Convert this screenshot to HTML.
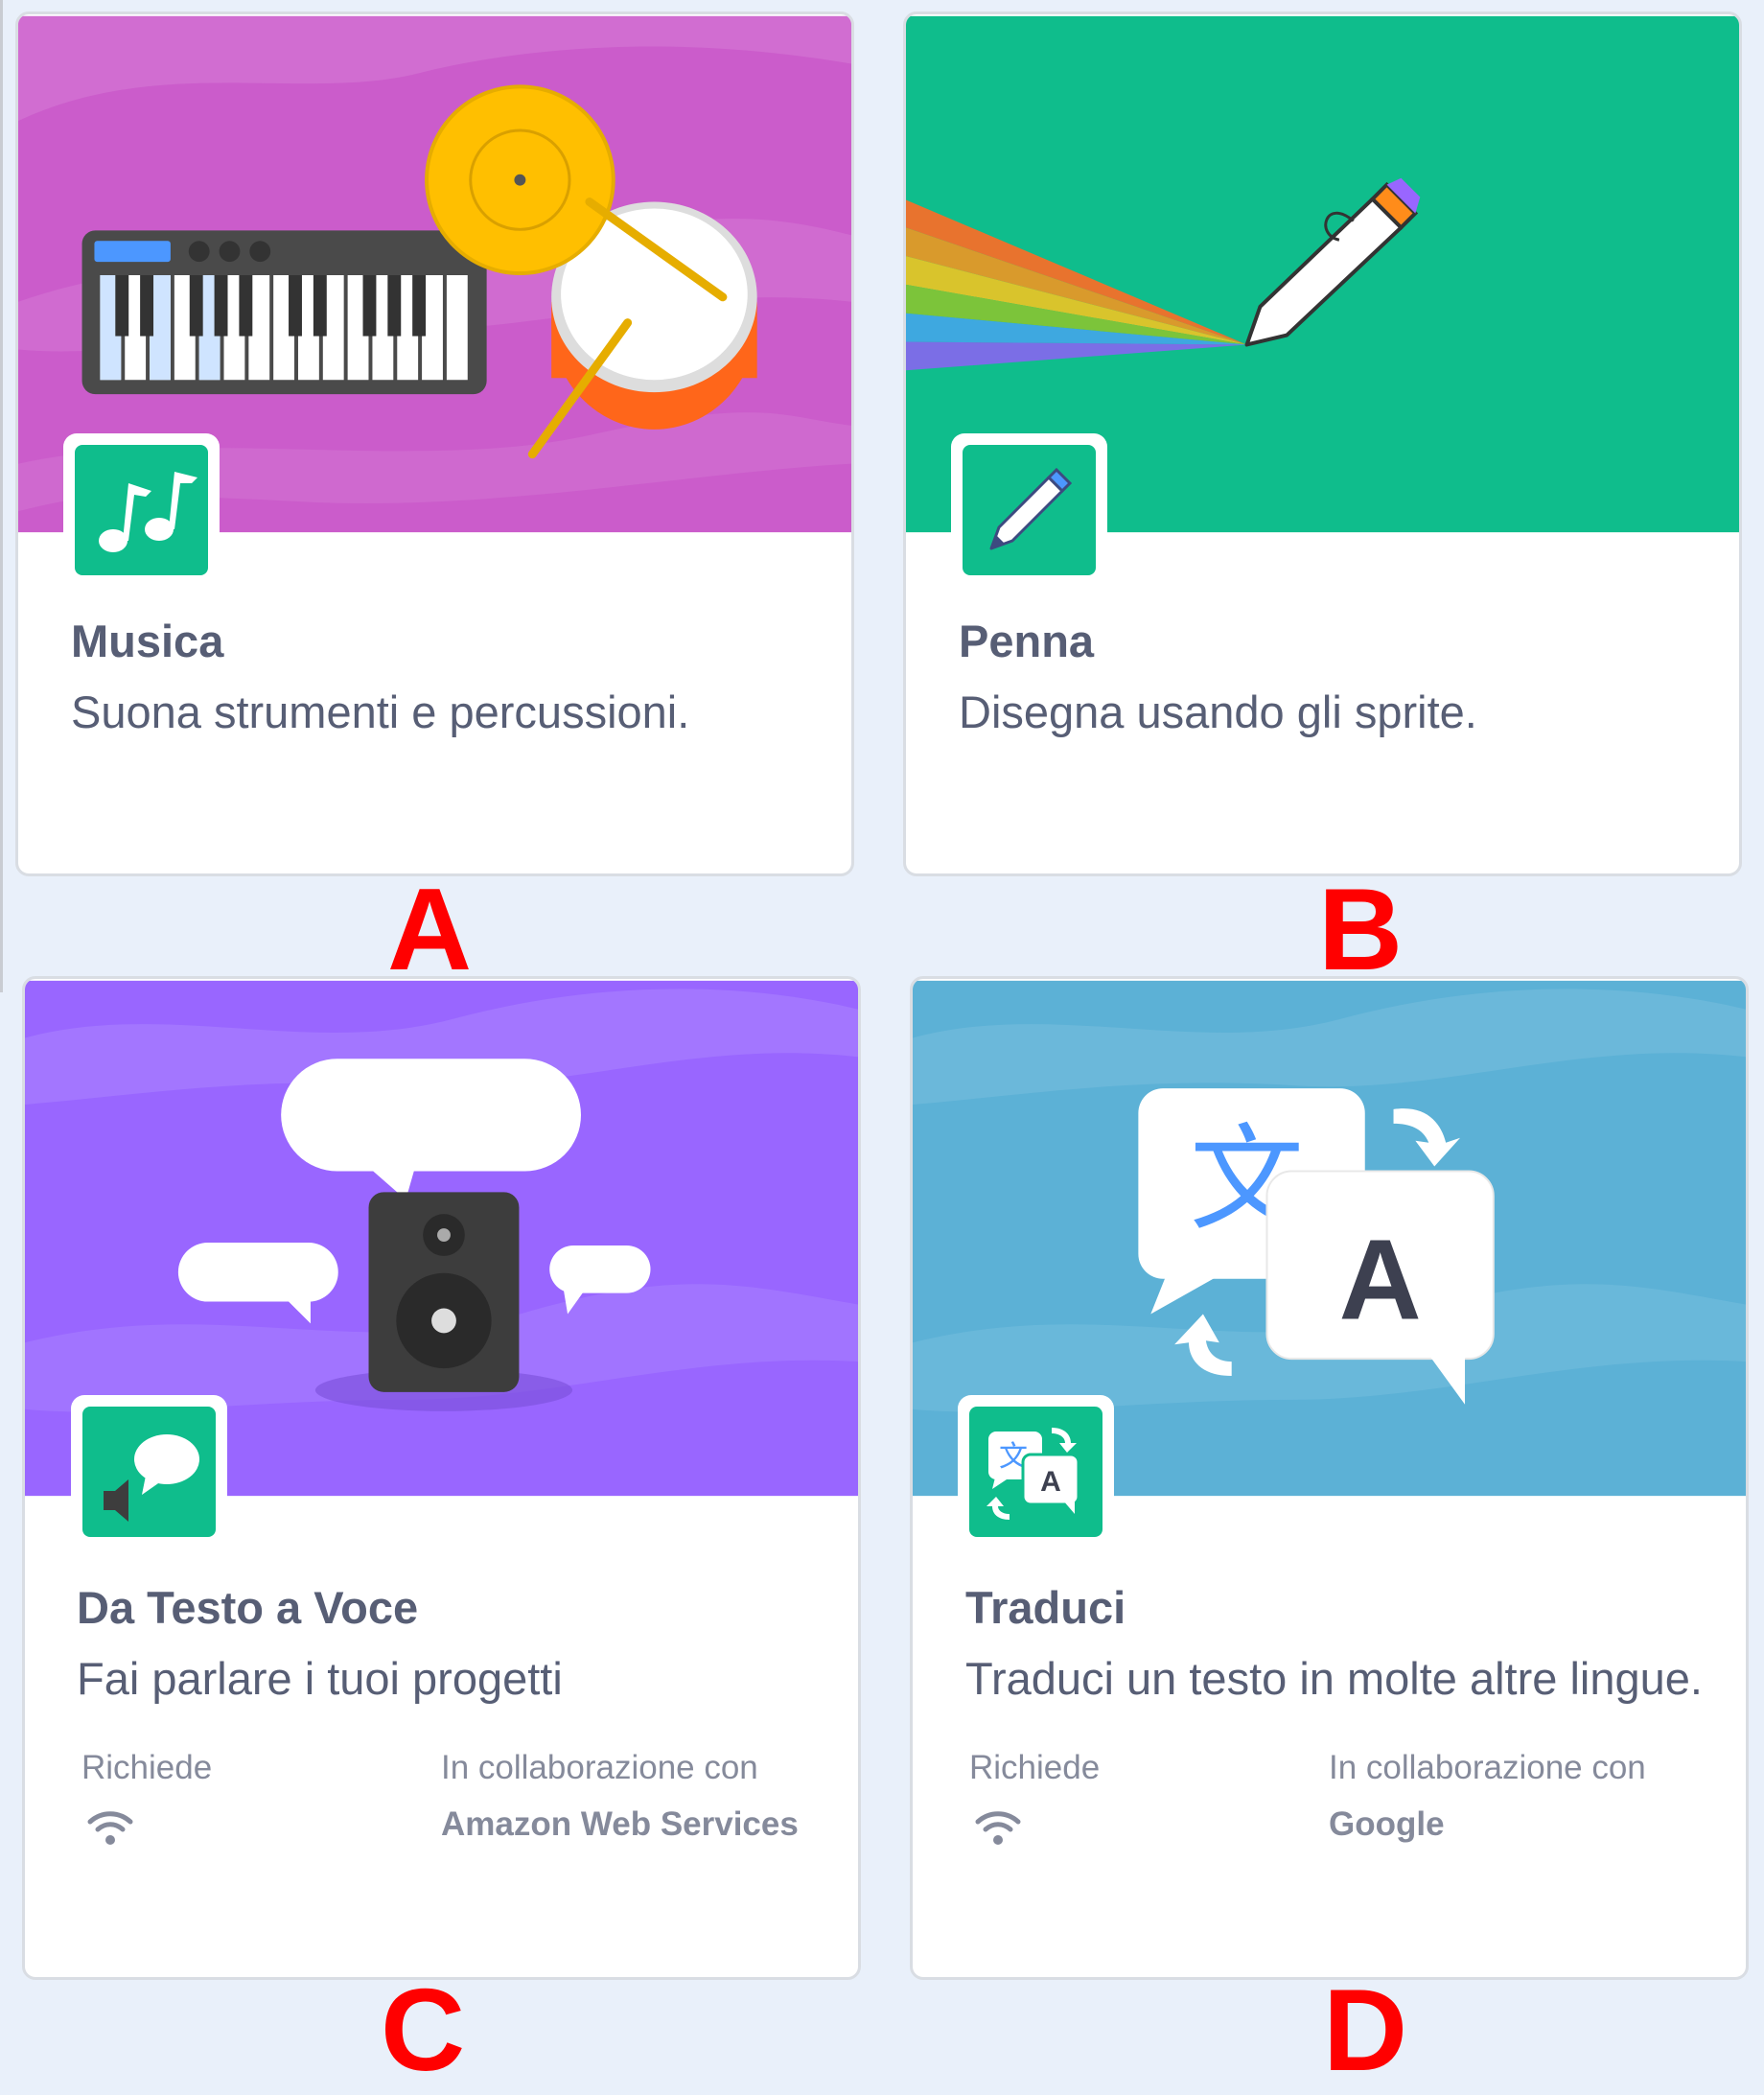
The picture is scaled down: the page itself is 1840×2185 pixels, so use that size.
<!DOCTYPE html>
<html><head><meta charset="utf-8"><style>
*{margin:0;padding:0;box-sizing:border-box}
body{width:1840px;height:2161px;background:#e9f0fa;position:relative;overflow:hidden;font-family:"Liberation Sans",Arial,sans-serif}
.card{position:absolute;background:#fff;border:3px solid #d9dde3;border-radius:14px;overflow:hidden}
.ban{position:absolute;left:0;top:0;width:100%;}
.ib{position:absolute;background:#fff;border-radius:14px;width:163px;height:156px}
.ig{position:absolute;left:12px;top:12px;width:139px;height:136px;background:#0fbd8c;border-radius:8px;overflow:hidden}
.t{position:absolute;font-weight:bold;font-size:47px;color:#575e75}
.d{position:absolute;font-size:47px;color:#575e75;white-space:nowrap}
.s{position:absolute;font-size:35px;color:#858a9b;white-space:nowrap}
.sb{position:absolute;font-size:35px;color:#858a9b;font-weight:bold;white-space:nowrap}
.lab{position:absolute;color:#f00;font-weight:bold;font-size:122px;line-height:1;transform:translateX(-50%)}
</style></head><body>
<div style="position:absolute;left:0;top:0;width:3px;height:1035px;background:#c9ccd2"></div>

<div class="lab" style="left:448px;top:908px">A</div>
<div class="lab" style="left:1419px;top:908px">B</div>

<!-- Card A -->
<div class="card" style="left:16px;top:12px;width:875px;height:902px">
 <svg class="ban" width="875" height="542" viewBox="0 0 875 542">
  <rect width="875" height="542" fill="#cb5ccb"/>
  <path d="M0 110 C150 40 300 90 420 60 S700 20 875 50 L875 0 0 0Z" fill="#d375d3" opacity=".7"/>
  <path d="M0 300 C200 230 350 290 520 250 S760 200 875 230 L875 300 C700 280 560 330 400 330 S100 360 0 350Z" fill="#d375d3" opacity=".6"/>
  <path d="M0 470 C180 430 420 480 600 440 S800 420 875 430 L875 470 C700 480 500 520 300 510 S80 500 0 520Z" fill="#d375d3" opacity=".5"/>
  <rect x="67" y="225" width="425" height="172" rx="14" fill="#4a4a4a"/>
  <rect x="80" y="236" width="80" height="22" rx="3" fill="#4c97ff"/>
  <circle cx="190" cy="247" r="11" fill="#333"/><circle cx="222" cy="247" r="11" fill="#333"/><circle cx="254" cy="247" r="11" fill="#333"/>
  <g fill="#fff">
   <rect x="86" y="272" width="22" height="110"/><rect x="112" y="272" width="22" height="110"/><rect x="138" y="272" width="22" height="110"/><rect x="164" y="272" width="22" height="110"/><rect x="190" y="272" width="22" height="110"/><rect x="216" y="272" width="22" height="110"/><rect x="242" y="272" width="22" height="110"/><rect x="268" y="272" width="22" height="110"/><rect x="294" y="272" width="22" height="110"/><rect x="320" y="272" width="22" height="110"/><rect x="346" y="272" width="22" height="110"/><rect x="372" y="272" width="22" height="110"/><rect x="398" y="272" width="22" height="110"/><rect x="424" y="272" width="22" height="110"/><rect x="450" y="272" width="22" height="110"/>
  </g>
  <g fill="#cfe4ff"><rect x="86" y="272" width="22" height="110"/><rect x="138" y="272" width="22" height="110"/><rect x="190" y="272" width="22" height="110"/></g>
  <g fill="#333">
   <rect x="102" y="272" width="14" height="64"/><rect x="128" y="272" width="14" height="64"/><rect x="180" y="272" width="14" height="64"/><rect x="206" y="272" width="14" height="64"/><rect x="232" y="272" width="14" height="64"/><rect x="284" y="272" width="14" height="64"/><rect x="310" y="272" width="14" height="64"/><rect x="362" y="272" width="14" height="64"/><rect x="388" y="272" width="14" height="64"/><rect x="414" y="272" width="14" height="64"/>
  </g>
  <ellipse cx="668" cy="322" rx="108" ry="112" fill="#ff661a"/>
  <rect x="560" y="300" width="216" height="80" fill="#ff661a"/>
  <ellipse cx="668" cy="295" rx="108" ry="100" fill="#ddd"/>
  <ellipse cx="668" cy="292" rx="98" ry="90" fill="#fff"/>
  <circle cx="527" cy="172" r="100" fill="#e6ad00"/>
  <circle cx="527" cy="172" r="96" fill="#ffbf00"/>
  <circle cx="527" cy="172" r="52" fill="none" stroke="#d9a000" stroke-width="3"/>
  <circle cx="527" cy="172" r="6" fill="#555"/>
  <line x1="600" y1="195" x2="740" y2="295" stroke="#e6ad00" stroke-width="9" stroke-linecap="round"/>
  <line x1="640" y1="322" x2="540" y2="460" stroke="#e6ad00" stroke-width="9" stroke-linecap="round"/>
 </svg>
 <div class="ib" style="left:47px;top:437px"><div class="ig">
  <svg width="139" height="136" viewBox="0 0 139 136"><g fill="#fff">
   <ellipse cx="40" cy="100" rx="15" ry="12"/><ellipse cx="88" cy="88" rx="15" ry="12"/>
   <path d="M50 100 L56 40 L80 48 L74 54 L62 52 L56 100Z"/><path d="M98 88 L104 28 L128 34 L122 40 L110 40 L104 88Z"/></g></svg>
 </div></div>
 <div class="t" style="left:55px;top:626px">Musica</div>
 <div class="d" style="left:55px;top:700px">Suona strumenti e percussioni.</div>
</div>

<!-- Card B -->
<div class="card" style="left:942px;top:12px;width:875px;height:902px">
 <svg class="ban" width="875" height="542" viewBox="0 0 875 542">
  <rect width="875" height="542" fill="#0fbd8c"/>
  <path d="M0 193 L358 345 L0 222Z" fill="#e8732e"/>
  <path d="M0 222 L358 345 L0 252Z" fill="#d99a2c"/>
  <path d="M0 252 L358 345 L0 282Z" fill="#d9c42c"/>
  <path d="M0 282 L358 345 L0 312Z" fill="#7cc43a"/>
  <path d="M0 312 L358 345 L0 342Z" fill="#3ea8e0"/>
  <path d="M0 342 L358 345 L0 372Z" fill="#7b6ee6"/>
  <path d="M358 345 L372 305 L490 192 L520 222 L400 335Z" fill="#fff" stroke="#333" stroke-width="4" stroke-linejoin="round"/>
  <path d="M490 192 L505 177 L535 207 L520 222Z" fill="#ff8c1a" stroke="#333" stroke-width="4"/>
  <path d="M505 177 L520 170 L540 190 L535 207Z" fill="#9966ff"/>
  <path d="M470 215 C440 190 430 230 455 235" fill="none" stroke="#333" stroke-width="3"/>
 </svg>
 <div class="ib" style="left:47px;top:437px"><div class="ig">
  <svg width="139" height="136" viewBox="0 0 139 136">
   <path d="M30 108 L38 86 L90 34 L104 48 L52 100Z" fill="#fff" stroke="#3d4a80" stroke-width="3" stroke-linejoin="round"/>
   <path d="M90 34 L98 26 L112 40 L104 48Z" fill="#4c97ff" stroke="#3d4a80" stroke-width="3"/>
   <path d="M30 108 L35 94 L44 103Z" fill="#3d4a80"/></svg>
 </div></div>
 <div class="t" style="left:55px;top:626px">Penna</div>
 <div class="d" style="left:55px;top:700px">Disegna usando gli sprite.</div>
</div>

<!-- Card C -->
<div class="card" style="left:23px;top:1018px;width:875px;height:1047px">
 <svg class="ban" width="875" height="541" viewBox="0 0 875 541">
  <rect width="875" height="541" fill="#9966ff"/>
  <path d="M0 60 C150 20 300 80 450 40 S750 0 875 30 L875 80 C700 60 560 120 400 110 S120 120 0 130Z" fill="#a67dff" opacity=".7"/>
  <path d="M0 380 C200 330 350 400 520 350 S760 320 875 340 L875 400 C700 390 560 440 400 440 S100 460 0 450Z" fill="#a67dff" opacity=".6"/>
  <ellipse cx="440" cy="430" rx="135" ry="22" fill="#7a4fd9" opacity=".6"/>
  <rect x="269" y="82" width="315" height="118" rx="59" fill="#fff"/>
  <path d="M360 195 L400 230 L410 195Z" fill="#fff"/>
  <rect x="361" y="222" width="158" height="210" rx="16" fill="#3d3d3d"/>
  <circle cx="440" cy="267" r="22" fill="#2a2a2a"/><circle cx="440" cy="267" r="7" fill="#aaa"/>
  <circle cx="440" cy="357" r="50" fill="#2a2a2a"/><circle cx="440" cy="357" r="13" fill="#ddd"/>
  <rect x="161" y="275" width="168" height="62" rx="31" fill="#fff"/>
  <path d="M270 330 L300 360 L300 330Z" fill="#fff"/>
  <rect x="551" y="278" width="106" height="50" rx="25" fill="#fff"/>
  <path d="M565 320 L570 350 L590 322Z" fill="#fff"/>
 </svg>
 <div class="ib" style="left:48px;top:434px"><div class="ig">
  <svg width="139" height="136" viewBox="0 0 139 136">
   <ellipse cx="88" cy="55" rx="34" ry="26" fill="#fff"/><path d="M66 72 L62 92 L82 78Z" fill="#fff"/>
   <path d="M22 88 L34 88 L48 76 L48 120 L34 108 L22 108Z" fill="#3d3d3d"/></svg>
 </div></div>
 <div class="t" style="left:54px;top:628px">Da Testo a Voce</div>
 <div class="d" style="left:54px;top:702px">Fai parlare i tuoi progetti</div>
 <div class="s" style="left:59px;top:803px">Richiede</div>
 <svg style="position:absolute;left:64px;top:866px" width="50" height="40" viewBox="0 0 50 40"><g fill="none" stroke="#858a9b" stroke-width="5" stroke-linecap="round"><path d="M4 13 C16 2 34 2 46 13"/><path d="M12 21 C20 14 30 14 38 21"/></g><circle cx="25" cy="32" r="5" fill="#858a9b"/></svg>
 <div class="s" style="left:434px;top:803px">In collaborazione con</div>
 <div class="sb" style="left:434px;top:862px">Amazon Web Services</div>
</div>

<!-- Card D -->
<div class="card" style="left:949px;top:1018px;width:875px;height:1047px">
 <svg class="ban" width="875" height="541" viewBox="0 0 875 541">
  <rect width="875" height="541" fill="#5cb1d6"/>
  <path d="M0 60 C150 20 300 80 450 40 S750 0 875 30 L875 80 C700 60 560 120 400 110 S120 120 0 130Z" fill="#6fbadb" opacity=".8"/>
  <path d="M0 380 C200 330 350 400 520 350 S760 320 875 340 L875 400 C700 390 560 440 400 440 S100 460 0 450Z" fill="#6fbadb" opacity=".7"/>
  <rect x="237" y="113" width="238" height="200" rx="26" fill="#fff"/>
  <path d="M270 300 L250 350 L330 305Z" fill="#fff"/>
  <text x="351" y="250" font-family="Noto Sans CJK SC,sans-serif" font-size="120" fill="#4c97ff" text-anchor="middle">文</text>
  <rect x="372" y="200" width="238" height="197" rx="26" fill="#fff" stroke="#e8e8e8" stroke-width="2"/>
  <path d="M540 390 L580 445 L580 390Z" fill="#fff"/>
  <text x="491" y="355" font-family="Liberation Sans,sans-serif" font-weight="bold" font-size="120" fill="#3d4050" text-anchor="middle">A</text>
  <path d="M505 135 C540 130 555 150 560 170 L575 165 L548 195 L528 168 L542 170 C536 155 522 150 505 150Z" fill="#fff"/>
  <path d="M335 415 C300 415 290 395 290 380 L275 382 L305 350 L322 380 L308 378 C310 392 320 400 335 400Z" fill="#fff"/>
 </svg>
 <div class="ib" style="left:47px;top:434px"><div class="ig">
  <svg width="139" height="136" viewBox="0 0 139 136">
   <rect x="20" y="26" width="56" height="50" rx="8" fill="#fff"/><path d="M28 70 L24 86 L42 74Z" fill="#fff"/>
   <text x="46" y="62" font-family="Noto Sans CJK SC,sans-serif" font-size="30" fill="#4c97ff" text-anchor="middle">文</text>
   <rect x="56" y="50" width="58" height="52" rx="8" fill="#fff" stroke="#0fbd8c" stroke-width="3"/><path d="M98 98 L110 112 L110 98Z" fill="#fff"/>
   <text x="85" y="88" font-family="Liberation Sans,sans-serif" font-weight="bold" font-size="30" fill="#3d4050" text-anchor="middle">A</text>
   <path d="M86 22 C100 22 106 30 106 38 L112 38 L102 48 L94 38 L100 38 C100 32 94 28 86 28Z" fill="#fff"/>
   <path d="M42 118 C30 118 24 112 24 104 L18 104 L28 94 L36 104 L30 104 C30 108 34 112 42 112Z" fill="#fff"/></svg>
 </div></div>
 <div class="t" style="left:55px;top:628px">Traduci</div>
 <div class="d" style="left:55px;top:702px">Traduci un testo in molte altre lingue.</div>
 <div class="s" style="left:59px;top:803px">Richiede</div>
 <svg style="position:absolute;left:64px;top:866px" width="50" height="40" viewBox="0 0 50 40"><g fill="none" stroke="#858a9b" stroke-width="5" stroke-linecap="round"><path d="M4 13 C16 2 34 2 46 13"/><path d="M12 21 C20 14 30 14 38 21"/></g><circle cx="25" cy="32" r="5" fill="#858a9b"/></svg>
 <div class="s" style="left:434px;top:803px">In collaborazione con</div>
 <div class="sb" style="left:434px;top:862px">Google</div>
</div>
<div class="lab" style="left:441px;top:2056px">C</div>
<div class="lab" style="left:1424px;top:2056px">D</div>
</body></html>
